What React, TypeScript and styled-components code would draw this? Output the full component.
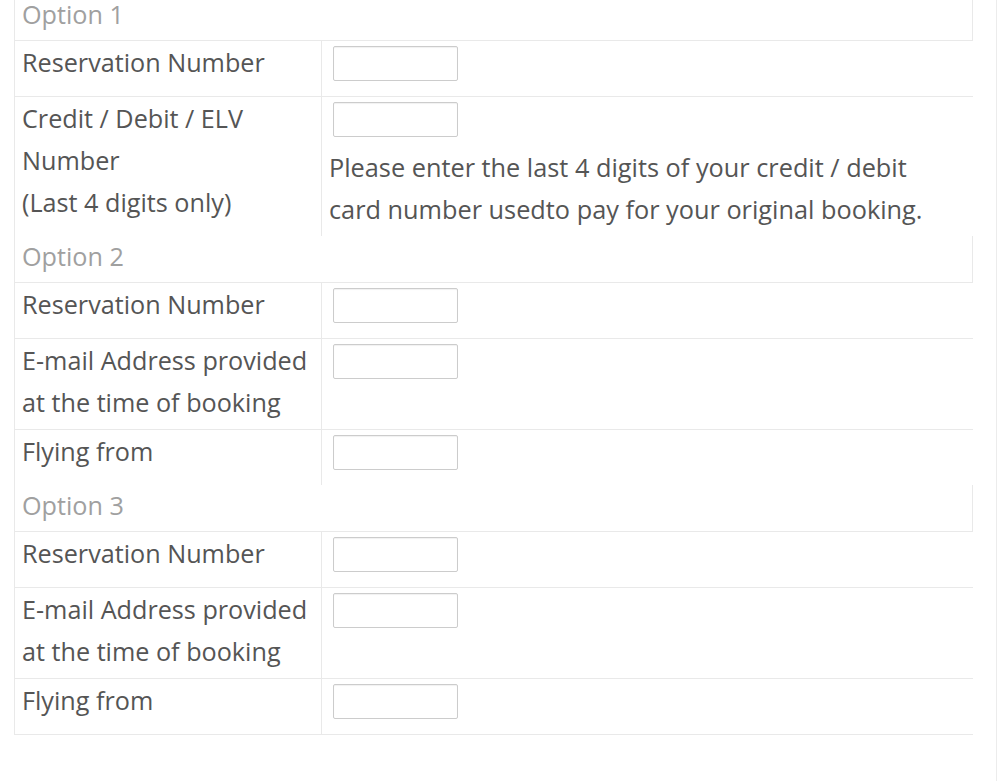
import React from "react";
import styled, { createGlobalStyle } from "styled-components";

// 데이터 형식 선언
interface FieldRow {
  label: string[];
  help?: string[];
}

interface OptionGroup {
  title: string;
  rows: FieldRow[];
}

const options: OptionGroup[] = [
  {
    title: "Option 1",
    rows: [
      { label: ["Reservation Number"] },
      {
        label: ["Credit / Debit / ELV", "Number", "(Last 4 digits only)"],
        help: ["Please enter the last 4 digits of your credit / debit", "card number usedto pay for your original booking."],
      },
    ],
  },
  {
    title: "Option 2",
    rows: [
      { label: ["Reservation Number"] },
      { label: ["E-mail Address provided", "at the time of booking"] },
      { label: ["Flying from"] },
    ],
  },
  {
    title: "Option 3",
    rows: [
      { label: ["Reservation Number"] },
      { label: ["E-mail Address provided", "at the time of booking"] },
      { label: ["Flying from"] },
    ],
  },
];

const lineColor = "#e9e9e9";

const GlobalStyle = createGlobalStyle`
  html, body {
    margin: 0;
    padding: 0;
    background: #fff;
  }
  body {
    font-family: "Open Sans", "Liberation Sans", sans-serif;
    overflow: hidden;
  }
`;

const Page = styled.div`
  width: 997px;
  height: 787px;
  border-right: 1px solid #ececec;
  box-sizing: border-box;
  padding: 0 27px 0 14px;
  margin-top: -6px;
`;

const Table = styled.div`
  display: flex;
  flex-direction: column;
  width: 958px;
  border-left: 1px solid ${lineColor};
  border-bottom: 1px solid ${lineColor};
`;

const OptionHeader = styled.div`
  font-size: 25.2px;
  line-height: 40px;
  color: #a0a0a0;
  padding: 0 8px 6px 7px;
  border-right: 1px solid ${lineColor};
  border-bottom: 1px solid ${lineColor};
`;

const Row = styled.div<{ last: boolean }>`
  display: grid;
  grid-template-columns: 307px 1fr;
  border-bottom: ${({ last }) => (last ? "none" : `1px solid ${lineColor}`)};
`;

const LabelCell = styled.div`
  font-size: 25.2px;
  line-height: 42px;
  color: #555;
  padding: 0 8px 6px 7px;
  border-right: 1px solid ${lineColor};
  white-space: nowrap;
`;

const ValueCell = styled.div`
  display: flex;
  flex-direction: column;
  align-items: flex-start;
  padding: 5px 8px 6px 7px;
`;

const TextInput = styled.input`
  box-sizing: border-box;
  width: 125px;
  height: 35px;
  margin: 0 0 9px 4px;
  border: 1px solid #cccccc;
  border-radius: 2px;
  box-shadow: inset 0 1px 1px rgba(0, 0, 0, 0.06);
  background: #fff;
  outline: none;
`;

const HelpText = styled.div`
  font-size: 25.3px;
  line-height: 42px;
  color: #555;
  white-space: nowrap;
`;

const App: React.FC = () => {
  return (
    <>
      <GlobalStyle />
      <Page>
        <Table>
          {options.map((group) => (
            <React.Fragment key={group.title}>
              <OptionHeader>{group.title}</OptionHeader>
              {group.rows.map((row, index) => (
                <Row key={index} last={index === group.rows.length - 1}>
                  <LabelCell>
                    {row.label.map((line) => (
                      <div key={line}>{line}</div>
                    ))}
                  </LabelCell>
                  <ValueCell>
                    <TextInput type="text" />
                    {row.help && (
                      <HelpText>
                        {row.help.map((line) => (
                          <div key={line}>{line}</div>
                        ))}
                      </HelpText>
                    )}
                  </ValueCell>
                </Row>
              ))}
            </React.Fragment>
          ))}
        </Table>
      </Page>
    </>
  );
};

export default App;
